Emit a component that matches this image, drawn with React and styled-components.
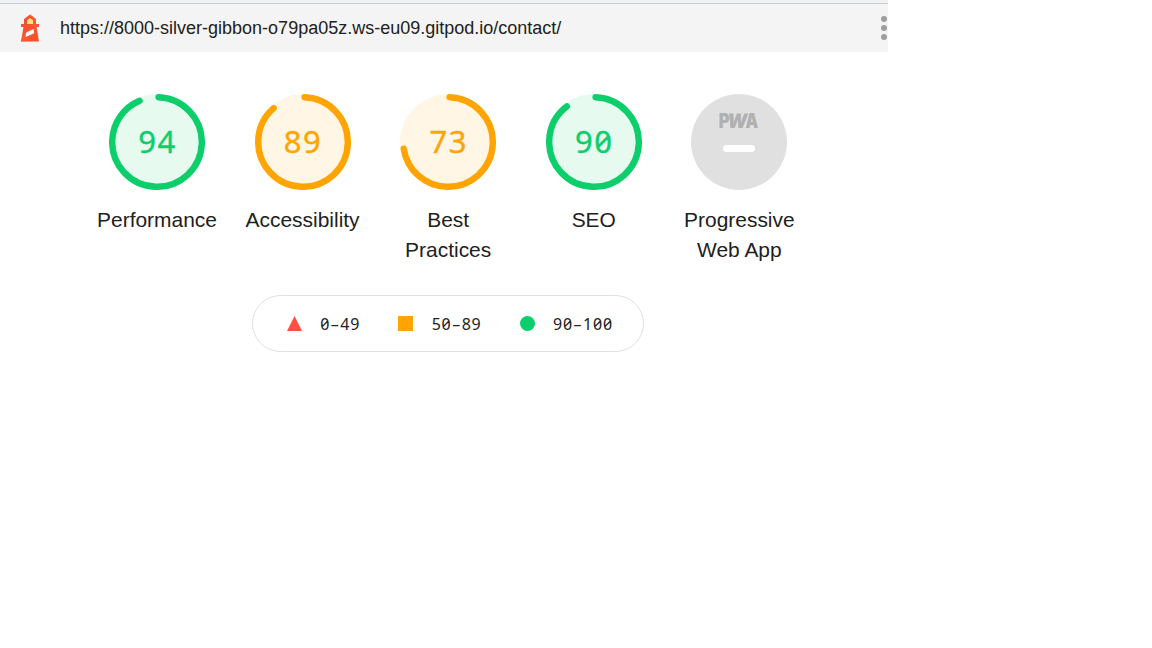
import React from "react";
import styled, { createGlobalStyle } from "styled-components";

const GlobalStyle = createGlobalStyle`
  body {
    margin: 0;
    background: #fff;
    color: #212121;
    font-family: "Liberation Sans", Arial, sans-serif;
  }
`;

const Report = styled.main`
  width: 888px;
`;

const Topbar = styled.header`
  box-sizing: border-box;
  height: 52px;
  padding: 3px 0 0 20px;
  display: flex;
  align-items: center;
  background: linear-gradient(#f1f2f4 3px, #cacdd1 3px, #cacdd1 4px, #f4f4f4 4px);
`;

const Lighthouse = styled.svg`
  width: 20px;
  height: 28px;
  flex: none;
`;

const Url = styled.span`
  margin-left: 20px;
  font-size: 18px;
  line-height: 24px;
  white-space: nowrap;
`;

const MenuButton = styled.button`
  display: flex;
  flex-direction: column;
  gap: 3px;
  margin: 0 1px 0 auto;
  padding: 0;
  border: 0;
  background: none;
`;

const Dot = styled.span`
  width: 6px;
  height: 6px;
  border-radius: 50%;
  background: #9e9e9e;
`;

const Scores = styled.section`
  display: flex;
  width: 728px;
  height: 201px;
  margin: 42px 0 0 84.2px;
`;

const Gauge = styled.div`
  flex: 1 1 0;
  display: flex;
  flex-direction: column;
  align-items: center;
`;

const Dial = styled.div`
  display: grid;
  place-items: center;
  width: 96px;
  height: 96px;

  > * {
    grid-area: 1 / 1;
  }
`;

const Ring = styled.svg`
  width: 96px;
  height: 96px;
  color: ${(p) => p.$color};
`;

const Score = styled.span`
  color: ${(p) => p.$color};
  font: 31px/40px "Noto Sans", sans-serif;
  font-feature-settings: "zero" 1;
  letter-spacing: 1.5px;
  -webkit-text-stroke: 0.35px currentColor;
  margin: 0 -1px 2px 0;
`;

const Label = styled.div`
  width: 120.4px;
  margin-top: 15px;
  font-size: 20.95px;
  line-height: 30px;
  text-align: center;
`;

const PwaBadge = styled.div`
  box-sizing: border-box;
  width: 96px;
  height: 96px;
  padding-top: 17px;
  display: flex;
  flex-direction: column;
  align-items: center;
  gap: 14px;
  border-radius: 50%;
  background: #e0e0e0;
`;

const PwaLogo = styled.svg`
  width: 40px;
  height: 20px;
  flex: none;
  overflow: visible;
  fill: #b0b0b0;
  font: 900 20px Inter, sans-serif;
`;

const Dash = styled.span`
  width: 32px;
  height: 7px;
  border-radius: 3.5px;
  background: #fff;
`;

const Legend = styled.div`
  box-sizing: border-box;
  display: flex;
  align-items: center;
  width: 392px;
  height: 57px;
  margin-left: 252px;
  padding-left: 34px;
  gap: 38.3px;
  border: 1px solid #e0e0e0;
  border-radius: 29px;
`;

const Range = styled.div`
  display: flex;
  align-items: center;
  gap: 18.2px;
  font: 16px/24px "Noto Sans", sans-serif;
  font-feature-settings: "zero" 1;
  letter-spacing: 0.8px;
`;

const RangeDash = styled.span`
  margin: 0 0.7px 0 0.6px;
`;

const Marker = styled.span`
  width: 15px;
  height: 15px;
  background: ${(p) => p.$color};
  border-radius: ${(p) => (p.$round ? "50%" : "0")};
  clip-path: ${(p) => (p.$triangle ? "polygon(50% 0, 100% 100%, 0 100%)" : "none")};
`;

const GREEN = "#0cce6b";
const ORANGE = "#ffa400";
const CIRCUMFERENCE = 2 * Math.PI * 56;

const categories = [
  { score: 94, label: "Performance", color: GREEN },
  { score: 89, label: "Accessibility", color: ORANGE },
  { score: 73, label: "Best Practices", color: ORANGE },
  { score: 90, label: "SEO", color: GREEN },
];

function LighthouseIcon() {
  return (
    <Lighthouse viewBox="0 0 20 28">
      <path d="M4 5 10 .5 16 5V10H19V13H16.5L19 27.5H1L3.5 13H1V10H4Z" fill="#f4512c" />
      <path d="M10 .5 16 5V10H19V13H16.5L17.3 18 5 27.5H1L2 22 13 10V5Z" fill="#ff5b37" opacity=".6" />
      <path d="M7 10V6.2L10 4 13 6.2V10Z" fill="#ffe57a" />
      <path d="M6.3 18.5 13.7 15 14 19.2 5.5 23Z" fill="#fff" />
    </Lighthouse>
  );
}

function ScoreGauge({ score, label, color }) {
  return (
    <Gauge>
      <Dial>
        <Ring viewBox="0 0 120 120" $color={color}>
          <circle cx="60" cy="60" r="60" fill="currentColor" opacity=".1" />
          <circle
            cx="60"
            cy="60"
            r="56"
            fill="none"
            stroke="currentColor"
            strokeWidth="8"
            strokeLinecap="round"
            strokeDasharray={`${(score / 100) * CIRCUMFERENCE - 3.8} ${CIRCUMFERENCE}`}
            transform="rotate(-87.95 60 60)"
          />
        </Ring>
        <Score $color={color}>{score}</Score>
      </Dial>
      <Label>{label}</Label>
    </Gauge>
  );
}

function LegendRange({ from, to, ...marker }) {
  return (
    <Range>
      <Marker {...marker} />
      <span>
        {from}
        <RangeDash>–</RangeDash>
        {to}
      </span>
    </Range>
  );
}

export default function App() {
  return (
    <Report>
      <GlobalStyle />
      <Topbar>
        <LighthouseIcon />
        <Url>https://8000-silver-gibbon-o79pa05z.ws-eu09.gitpod.io/contact/</Url>
        <MenuButton aria-label="Tools">
          <Dot />
          <Dot />
          <Dot />
        </MenuButton>
      </Topbar>
      <Scores>
        {categories.map((c) => (
          <ScoreGauge key={c.label} {...c} />
        ))}
        <Gauge>
          <PwaBadge>
            <PwaLogo viewBox="0 0 40 20">
              <text transform="translate(-.3 17) scale(.82 1)">P</text>
              <text transform="translate(7.6 17) skewX(-9) scale(.92 1)">W</text>
              <text transform="translate(26.6 17) scale(.8 1)">A</text>
            </PwaLogo>
            <Dash />
          </PwaBadge>
          <Label>Progressive Web App</Label>
        </Gauge>
      </Scores>
      <Legend>
        <LegendRange from="0" to="49" $color="#ff4e42" $triangle />
        <LegendRange from="50" to="89" $color={ORANGE} />
        <LegendRange from="90" to="100" $color={GREEN} $round />
      </Legend>
    </Report>
  );
}
